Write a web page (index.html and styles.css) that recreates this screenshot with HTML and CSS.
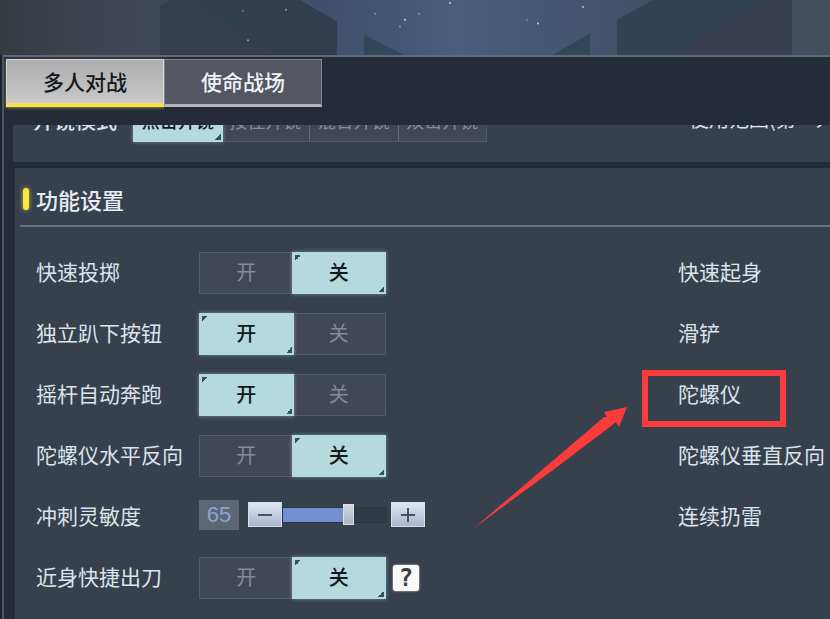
FILE: index.html
```html
<!DOCTYPE html>
<html lang="zh-CN">
<head>
    <meta charset="UTF-8">
    <meta name="viewport" content="width=device-width, initial-scale=1.0">
    <title>功能设置</title>
    <link rel="stylesheet" href="styles.css">
</head>
<body>
    <!-- Night sky behind the panel -->
    <svg class="scene" viewBox="0 0 830 56" preserveAspectRatio="none" aria-hidden="true">
        <defs>
            <linearGradient id="sky" x1="0" y1="0" x2="1" y2="0">
                <stop offset="0" stop-color="#353b40"/>
                <stop offset="0.08" stop-color="#3d424d"/>
                <stop offset="0.2" stop-color="#40475a"/>
                <stop offset="0.4" stop-color="#40506d"/>
                <stop offset="0.55" stop-color="#4a5d7d"/>
                <stop offset="0.75" stop-color="#435269"/>
                <stop offset="1" stop-color="#454d5d"/>
            </linearGradient>
        </defs>
        <rect width="830" height="56" fill="url(#sky)"/>
        <path d="M160 6 170 0H300L337 22V56H160z" fill="#303e4e"/>
        <path d="M160 6 170 0H195L278 56H160z" fill="#363d4e"/>
        <path d="M364 35 404 56H364z" fill="#34475a"/>
        <path d="M552 56 590 34V56z" fill="#34475a"/>
        <path d="M617 20 653 0H792V56H617z" fill="#324354"/>
        <path d="M765 0H792V56H670z" fill="#3a4051"/>
        <g fill="#c3d2e4">
            <circle cx="405" cy="20" r="1"/>
            <circle cx="450" cy="3" r="1"/>
            <circle cx="538" cy="24" r="1"/>
            <circle cx="583" cy="7" r="1"/>
            <circle cx="286" cy="10" r="1" opacity="0.6"/>
            <circle cx="248" cy="41" r="1" opacity="0.6"/>
            <circle cx="375" cy="14" r="1" opacity="0.5"/>
            <circle cx="400" cy="27" r="1" opacity="0.5"/>
            <circle cx="419" cy="14" r="1" opacity="0.5"/>
            <circle cx="243" cy="11" r="1" opacity="0.4"/>
            <circle cx="527" cy="20" r="1" opacity="0.4"/>
        </g>
    </svg>

    <main class="panel">
        <nav class="tabs">
            <button type="button" class="tab active">多人对战</button>
            <button type="button" class="tab">使命战场</button>
        </nav>

        <!-- Scrolled past, only the bottom part of the row shows -->
        <section class="card scope-card">
            <div class="scope-row">
                <span class="label bold">开镜模式</span>
                <div class="toggle scope" role="radiogroup" aria-label="开镜模式">
                    <label class="option"><input type="radio" name="scope" checked><span>点击开镜</span></label>
                    <label class="option"><input type="radio" name="scope"><span>按住开镜</span></label>
                    <label class="option"><input type="radio" name="scope"><span>混合开镜</span></label>
                    <label class="option"><input type="radio" name="scope"><span>双击开镜</span></label>
                </div>
                <span class="label range-label">使用范围(第一人</span>
            </div>
        </section>

        <section class="card">
            <h2 class="card-title">功能设置</h2>
            <div class="settings">
                <span class="label">快速投掷</span>
                <div class="toggle" role="radiogroup" aria-label="快速投掷">
                    <label class="option"><input type="radio" name="throw"><span>开</span></label>
                    <label class="option"><input type="radio" name="throw" checked><span>关</span></label>
                </div>
                <span class="label">快速起身</span>

                <span class="label">独立趴下按钮</span>
                <div class="toggle" role="radiogroup" aria-label="独立趴下按钮">
                    <label class="option"><input type="radio" name="prone" checked><span>开</span></label>
                    <label class="option"><input type="radio" name="prone"><span>关</span></label>
                </div>
                <span class="label">滑铲</span>

                <span class="label">摇杆自动奔跑</span>
                <div class="toggle" role="radiogroup" aria-label="摇杆自动奔跑">
                    <label class="option"><input type="radio" name="run" checked><span>开</span></label>
                    <label class="option"><input type="radio" name="run"><span>关</span></label>
                </div>
                <span class="label marked">陀螺仪
                    <svg class="arrow" width="156" height="124" viewBox="0 0 156 124" aria-hidden="true">
                        <path d="M1 123 131 12 134 12 131 7 154 2 146 22 143 17 138 21 80 65z" fill="#fb3b3c"/>
                    </svg>
                </span>

                <span class="label">陀螺仪水平反向</span>
                <div class="toggle" role="radiogroup" aria-label="陀螺仪水平反向">
                    <label class="option"><input type="radio" name="gyro"><span>开</span></label>
                    <label class="option"><input type="radio" name="gyro" checked><span>关</span></label>
                </div>
                <span class="label">陀螺仪垂直反向</span>

                <label class="label" for="sprint">冲刺灵敏度</label>
                <div class="slider">
                    <output class="value" for="sprint">65</output>
                    <button type="button" class="step" aria-label="减少">
                        <svg width="14" height="14" viewBox="0 0 14 14"><path d="M0 7H14" stroke="#4a5362" stroke-width="2"/></svg>
                    </button>
                    <input type="range" id="sprint" min="0" max="100" value="65">
                    <button type="button" class="step" aria-label="增加">
                        <svg width="14" height="14" viewBox="0 0 14 14"><path d="M0 7H14M7 0V14" stroke="#4a5362" stroke-width="2"/></svg>
                    </button>
                </div>
                <span class="label">连续扔雷</span>

                <span class="label">近身快捷出刀</span>
                <div class="with-help">
                    <div class="toggle" role="radiogroup" aria-label="近身快捷出刀">
                        <label class="option"><input type="radio" name="knife"><span>开</span></label>
                        <label class="option"><input type="radio" name="knife" checked><span>关</span></label>
                    </div>
                    <button type="button" class="help">?</button>
                </div>
            </div>
        </section>
    </main>
</body>
</html>
```
FILE: styles.css
```css
*,
*::before,
*::after {
    box-sizing: border-box;
}

body {
    margin: 0;
    min-height: 100vh;
    display: flex;
    flex-direction: column;
    overflow: hidden;
    background-color: #1c212a;
    color: #dbe3ed;
    font-family: "Noto Sans CJK SC", sans-serif;
    font-size: 21px;
    line-height: 30px;
}

button {
    padding: 0;
    border: none;
    font-family: inherit;
    cursor: pointer;
}

.scene {
    display: block;
    width: 100%;
    height: 55px;
}

/* Settings panel */
.panel {
    flex: 1;
    display: flex;
    flex-direction: column;
    margin-left: 2px;
    padding-left: 9px;
    border-top: 2px solid #5d6878;
    border-left: 2px solid #4b5463;
    background-color: #252b37;
}

.tabs {
    display: flex;
    margin-left: -7px;
    padding: 2px 0 18px;
}

.tab {
    width: 158px;
    height: 48px;
    padding-bottom: 2px;
    border: 1px solid #85878f;
    border-bottom: 3px solid #b4b5bf;
    background-color: #545761;
    color: #f2f3f5;
    font-size: 21px;
    font-weight: 500;
}

.tab.active {
    border: 1px solid #d5d5d5;
    border-bottom: 4px solid #f5e04f;
    background: linear-gradient(#adadaf, #c9c9c9);
    color: #15171a;
    box-shadow: 0 1px 3px rgba(245, 224, 79, 0.5);
}

/* Cards */
.card {
    background-color: #37414e;
}

.card + .card {
    flex: 1;
    margin: 6px 0 0 2px;
    padding-left: 5px;
}

.scope-card {
    display: flex;
    flex-direction: column;
    justify-content: flex-end;
    height: 37px;
    padding: 0 0 20px 20px;
    overflow: hidden;
}

.scope-row {
    display: grid;
    grid-template-columns: 100px 1fr 141px;
    align-items: center;
}

.card-title {
    display: flex;
    align-items: center;
    gap: 7px;
    height: 59px;
    margin: 0;
    padding: 5px 0 0 3px;
    border-bottom: 2px solid #65717e;
    color: #e6edf6;
    font-size: 22px;
    font-weight: 500;
}

.card-title::before {
    content: "";
    width: 6px;
    height: 22px;
    border-radius: 3px;
    background-color: #fbe63f;
    box-shadow: 0 0 4px rgba(251, 230, 63, 0.7);
}

.settings {
    display: grid;
    grid-template-columns: 163px 1fr 152px;
    grid-auto-rows: 61px;
    align-items: center;
    padding: 15px 0 0 16px;
}

.label {
    padding-bottom: 4px;
    white-space: nowrap;
}

.label.bold {
    font-weight: 500;
}

.range-label {
    overflow: hidden;
    font-size: 20px;
}

/* On / off switch */
.toggle {
    display: flex;
    width: 187px;
    height: 42px;
    border: 1px solid #525c69;
    background-color: #414755;
}

.option {
    position: relative;
    display: flex;
    flex: 1;
    cursor: pointer;
}

.option input {
    position: absolute;
    inset: 0;
    margin: 0;
    opacity: 0;
}

.option span {
    flex: 1;
    display: flex;
    align-items: center;
    justify-content: center;
    margin: -1px;
    padding-bottom: 2px;
    color: #858b97;
    font-size: 20px;
}

.option input:checked + span {
    background:
        linear-gradient(135deg, #38505a 50%, transparent 50%) 3px 3px / 6px 6px no-repeat,
        linear-gradient(315deg, #38505a 50%, transparent 50%) right 2px bottom 2px / 6px 6px no-repeat,
        #b5dade;
    box-shadow: 0 0 4px rgba(181, 218, 222, 0.5);
    color: #10191d;
    font-weight: 500;
}

.toggle.scope {
    width: 354px;
}

.scope .option + .option {
    border-left: 1px solid #656d7a;
}

.scope .option:nth-child(2) {
    border-left: none;
}

.toggle.scope .option span {
    font-size: 18px;
}

/* Sensitivity slider */
.slider {
    display: flex;
    align-items: center;
    margin-bottom: 4px;
}

.value {
    width: 40px;
    margin-right: 9px;
    background-color: #5b6774;
    color: #8da4d3;
    font-family: "Liberation Sans", sans-serif;
    font-size: 22px;
    text-align: center;
}

.step {
    display: flex;
    align-items: center;
    justify-content: center;
    width: 34px;
    height: 25px;
    border: 1px solid #d6dded;
    background: linear-gradient(#dfe5f1, #a9b6cf);
}

.slider input {
    appearance: none;
    width: 105px;
    height: 22px;
    margin: 0 4px 0 0;
    background: none;
}

.slider input::-webkit-slider-runnable-track {
    height: 16px;
    border: 1px solid #2b3645;
    background: linear-gradient(90deg, #738fd0 64%, #303b49 64%);
}

.slider input::-webkit-slider-thumb {
    appearance: none;
    width: 11px;
    height: 21px;
    margin-top: -4px;
    border: 1px solid #d9dfe6;
    background: linear-gradient(#d2d9df, #a9b4be);
}

.with-help {
    display: flex;
    align-items: center;
    gap: 7px;
}

.help {
    width: 26px;
    height: 26px;
    border-radius: 3px;
    background-color: #fafafa;
    box-shadow: 0 0 2px #fafafa;
    color: #3c3e42;
    font-family: "DejaVu Sans Mono", monospace;
    font-size: 24px;
    font-weight: bold;
    line-height: 26px;
}

/* Red callout */
.marked {
    position: relative;
}

.marked::after {
    content: "";
    position: absolute;
    top: -8px;
    left: -36px;
    width: 144px;
    height: 57px;
    border: 6px solid #fb3b3c;
}

.arrow {
    position: absolute;
    top: 27px;
    left: -205px;
}
```
